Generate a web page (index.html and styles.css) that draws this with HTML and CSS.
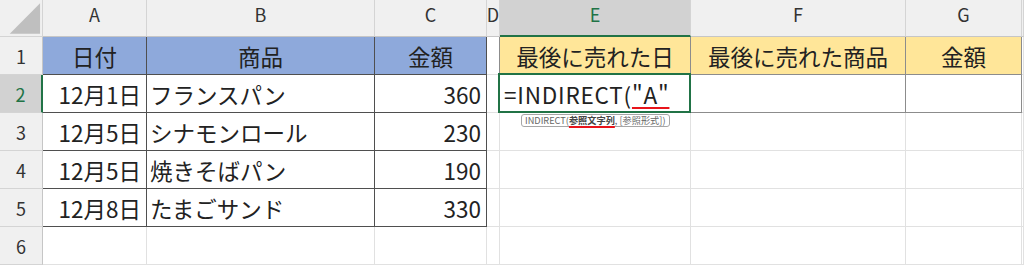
FILE: index.html
```html
<!DOCTYPE html>
<html lang="ja">
<head>
<meta charset="utf-8">
<link rel="stylesheet" href="styles.css">
</head>
<body>
<div class="sheet">
  <!-- header row -->
  <div class="c corner"><svg width="43" height="37" viewBox="0 0 43 37"><polygon points="41,3 41,34 10,34" fill="#bfbfbf"/></svg></div>
  <div class="c ch">A</div>
  <div class="c ch">B</div>
  <div class="c ch">C</div>
  <div class="c ch">D</div>
  <div class="c ch sel">E</div>
  <div class="c ch">F</div>
  <div class="c ch">G</div>
  <div class="c ch last"></div>

  <!-- row 1 -->
  <div class="c rh">1</div>
  <div class="c t blue ctr">日付</div>
  <div class="c t blue ctr">商品</div>
  <div class="c t blue ctr">金額</div>
  <div class="c dy"></div>
  <div class="c y yellow ctr">最後に売れた日</div>
  <div class="c y yellow ctr">最後に売れた商品</div>
  <div class="c y yellow ctr">金額</div>
  <div class="c"></div>

  <!-- row 2 -->
  <div class="c rh rsel">2</div>
  <div class="c t right">12月1日</div>
  <div class="c t left">フランスパン</div>
  <div class="c t right">360</div>
  <div class="c dy"></div>
  <div class="c y left formula">=INDIRECT(<span class="err">"A"</span></div>
  <div class="c y"></div>
  <div class="c y"></div>
  <div class="c"></div>

  <!-- row 3 -->
  <div class="c rh">3</div>
  <div class="c t right">12月5日</div>
  <div class="c t left">シナモンロール</div>
  <div class="c t right">230</div>
  <div class="c"></div>
  <div class="c"></div>
  <div class="c"></div>
  <div class="c"></div>
  <div class="c"></div>

  <!-- row 4 -->
  <div class="c rh">4</div>
  <div class="c t right">12月5日</div>
  <div class="c t left">焼きそばパン</div>
  <div class="c t right">190</div>
  <div class="c"></div>
  <div class="c"></div>
  <div class="c"></div>
  <div class="c"></div>
  <div class="c"></div>

  <!-- row 5 -->
  <div class="c rh">5</div>
  <div class="c t right">12月8日</div>
  <div class="c t left">たまごサンド</div>
  <div class="c t right">330</div>
  <div class="c"></div>
  <div class="c"></div>
  <div class="c"></div>
  <div class="c"></div>
  <div class="c"></div>

  <!-- row 6 -->
  <div class="c rh">6</div>
  <div class="c"></div>
  <div class="c"></div>
  <div class="c"></div>
  <div class="c"></div>
  <div class="c"></div>
  <div class="c"></div>
  <div class="c"></div>
  <div class="c"></div>

  <div class="selbox"></div>
  <div class="tip">INDIRECT(<b class="arg">参照文字列</b>, [参照形式])</div>
</div>
</body>
</html>
```
FILE: styles.css
```css
html, body {
  margin: 0;
  padding: 0;
  background: #ffffff;
}

.sheet {
  position: relative;
  display: grid;
  grid-template-columns: 43px 104px 228px 112px 13px 191px 215px 116px 1fr;
  grid-template-rows: 37px repeat(6, 38px);
  width: 1024px;
  height: 266px;
  overflow: hidden;
  font-family: "Noto Sans CJK JP", "Noto Sans", sans-serif;
  color: #222222;
}

.c {
  box-sizing: border-box;
  border-right: 1px solid #e1e1e1;
  border-bottom: 1px solid #e1e1e1;
  display: flex;
  align-items: center;
  font-size: 22.5px;
  white-space: nowrap;
  overflow: visible;
  min-width: 0;
}

.corner {
  background: #f0f0f0;
  border-color: #d4d4d4;
  padding: 0;
  align-items: stretch;
}

.corner svg {
  display: block;
}

.ch {
  background: #f0f0f0;
  border-right-color: #d4d4d4;
  border-bottom-color: #c6c6c6;
  justify-content: center;
  align-items: flex-start;
  font-size: 18px;
  line-height: 24px;
  padding-top: 2px;
  color: #333333;
}

.ch.sel {
  background: #d2d2d2;
  color: #217346;
  border-bottom: 2px solid #217346;
}

.rh {
  background: #f0f0f0;
  border-right-color: #c6c6c6;
  border-bottom-color: #d4d4d4;
  justify-content: center;
  font-size: 18px;
  color: #333333;
}

.rh.rsel {
  background: #d2d2d2;
  color: #217346;
  border-right: 2px solid #217346;
}

.t {
  border-right-color: #4f4f4f;
  border-bottom-color: #4f4f4f;
}

.y {
  border-right-color: #8c8c8c;
  border-bottom-color: #8c8c8c;
}

.dy {
  border-right-color: #8c8c8c;
}

.blue {
  background: #8ea9db;
}

.yellow {
  background: #ffe699;
}

.ctr {
  justify-content: center;
}

.right {
  justify-content: flex-end;
  padding-right: 5px;
}

.left {
  justify-content: flex-start;
  padding-left: 3px;
}

.formula {
  padding-left: 4px;
  letter-spacing: 0.8px;
}

.err {
  text-decoration: underline;
  text-decoration-color: #e8141b;
  text-decoration-thickness: 2px;
  text-underline-offset: 3px;
}

.selbox {
  position: absolute;
  left: 498px;
  top: 73px;
  width: 193px;
  height: 40px;
  box-sizing: border-box;
  border: 2px solid #217346;
  pointer-events: none;
}

.tip {
  position: absolute;
  left: 521px;
  top: 114px;
  height: 13px;
  box-sizing: border-box;
  padding: 0 3px;
  border: 1px solid #a6a6a6;
  border-radius: 3px;
  background: #ffffff;
  font-size: 9.2px;
  line-height: 11px;
  color: #666666;
  white-space: nowrap;
}

.tip .arg {
  font-weight: bold;
  color: #444444;
  text-decoration: underline;
  text-decoration-color: #e8141b;
  text-decoration-thickness: 1.5px;
  text-underline-offset: 2px;
}
```
